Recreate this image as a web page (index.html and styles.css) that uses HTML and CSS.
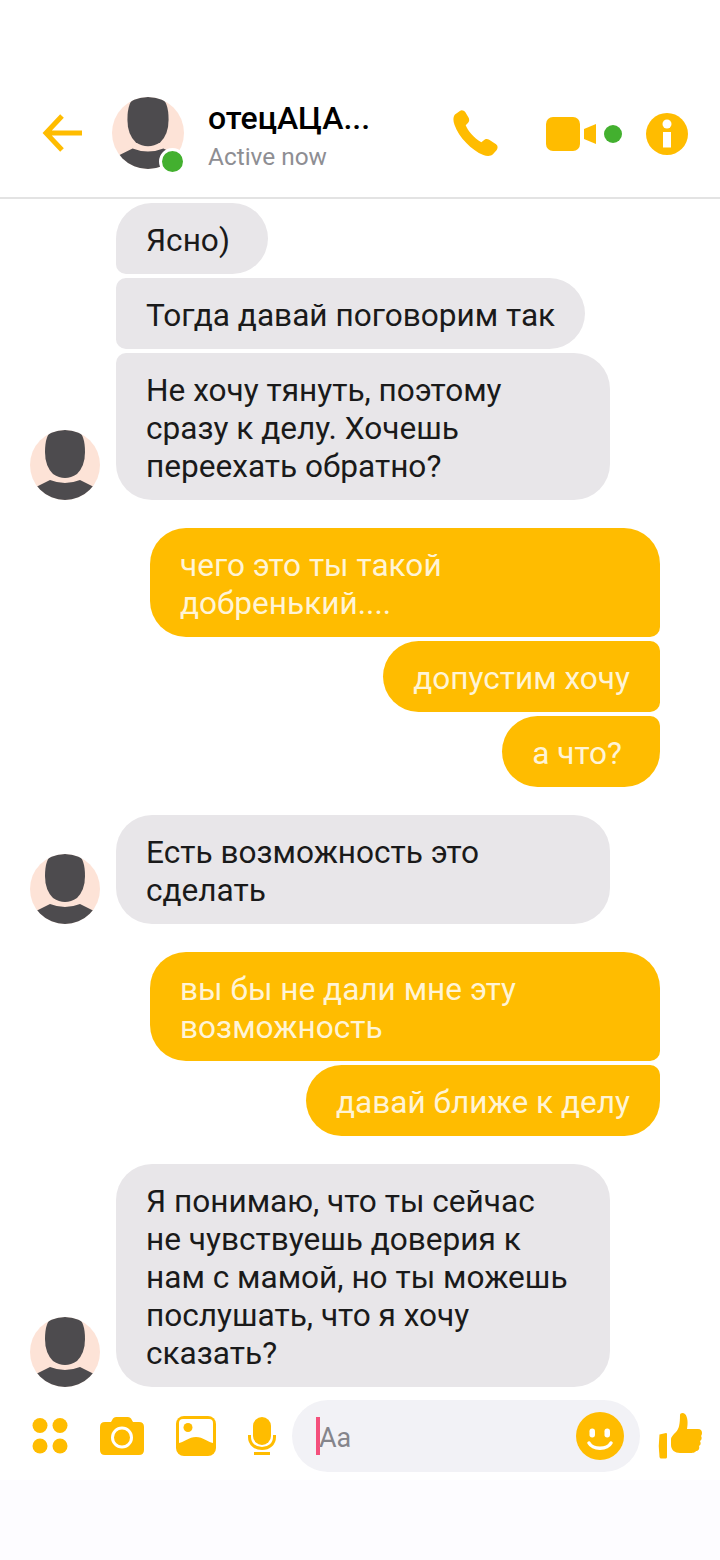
FILE: index.html
```html
<!DOCTYPE html>
<html lang="en">
<head>
    <meta charset="UTF-8">
    <meta name="viewport" content="width=device-width, initial-scale=1.0">
    <title>Chat</title>
    <link rel="stylesheet" href="styles.css">
</head>
<body>
    <svg class="defs" width="0" height="0">
        <clipPath id="avatarClip"><circle cx="35" cy="35" r="35"/></clipPath>
        <symbol id="avatar" viewBox="0 0 70 70">
            <circle cx="35" cy="35" r="35" fill="#fde3d7"/>
            <g clip-path="url(#avatarClip)" fill="#4d4b4e">
                <path d="M22 1 Q35 -1 48 1 Q55 5 55 22 Q55 36 47 44 Q41 48 35 48 Q29 48 23 44 Q15 36 15 22 Q15 5 22 1Z"/>
                <path d="M0 60 L20 50 Q35 56 50 50 L70 60 V70 H0Z"/>
            </g>
        </symbol>
    </svg>

    <header class="top-bar">
        <svg class="back-icon" width="42" height="40" viewBox="0 0 42 40"><path d="M40 20H5M20 3 4 20l16 17" fill="none" stroke="#ffbc00" stroke-width="5"/></svg>
        <div class="top-avatar">
            <svg width="72" height="72"><use href="#avatar"/></svg>
            <span class="online-badge"></span>
        </div>
        <div class="contact">
            <div class="contact-name">отецАЦА...</div>
            <div class="contact-status">Active now</div>
        </div>
        <div class="actions">
            <svg class="phone-icon" width="45" height="47" viewBox="0 0 46 48"><path fill="#ffbc00" d="M7 1C9-.5 11 .5 12.500 2L16 8C17 10 16.500 12 15 13.500L13 15.500C15 21 21 28 29 33L31.500 31C33 29.500 35 29 37 30.500L44 35C46 36.500 46 39 44.500 41L41 45C38.500 47.500 35 47.500 31 46C19 41 6 28 1.500 15C0 11 0 7 2 4.500Z"/></svg>
            <svg class="video-icon" width="50" height="34" viewBox="0 0 50 34"><rect width="34" height="34" rx="7" fill="#ffbc00"/><path d="M38 12 50 7V27L38 22Z" fill="#ffbc00"/></svg>
            <span class="video-dot"></span>
            <svg class="info-icon" width="42" height="42" viewBox="0 0 42 42"><circle cx="21" cy="21" r="21" fill="#ffbc00"/><circle cx="21" cy="11" r="4.500" fill="#fff"/><path d="M17 19H25V34.500H17Z" fill="#fff"/></svg>
        </div>
    </header>

    <main class="messages">
        <div class="group incoming">
            <svg class="avatar" width="70" height="70"><use href="#avatar"/></svg>
            <div class="stack">
                <div class="bubble bubble-short">Ясно)</div>
                <div class="bubble">Тогда давай поговорим так</div>
                <div class="bubble">Не хочу тянуть, поэтому сразу к делу. Хочешь переехать обратно?</div>
            </div>
        </div>

        <div class="group outgoing">
            <div class="stack">
                <div class="bubble">чего это ты такой добренький....</div>
                <div class="bubble">допустим хочу</div>
                <div class="bubble bubble-short">а что?</div>
            </div>
        </div>

        <div class="group incoming">
            <svg class="avatar" width="70" height="70"><use href="#avatar"/></svg>
            <div class="stack">
                <div class="bubble">Есть возможность это сделать</div>
            </div>
        </div>

        <div class="group outgoing">
            <div class="stack">
                <div class="bubble">вы бы не дали мне эту возможность</div>
                <div class="bubble">давай ближе к делу</div>
            </div>
        </div>

        <div class="group incoming">
            <svg class="avatar" width="70" height="70"><use href="#avatar"/></svg>
            <div class="stack">
                <div class="bubble">Я понимаю, что ты сейчас<br>не чувствуешь доверия к<br>нам с мамой, но ты можешь послушать, что я хочу сказать?</div>
            </div>
        </div>
    </main>

    <footer class="composer">
        <svg width="36" height="36" viewBox="0 0 36 36" class="tool-grid" fill="#ffbc00"><circle cx="8" cy="7.500" r="7.500"/><circle cx="28" cy="7.500" r="7.500"/><circle cx="8" cy="28" r="7.500"/><circle cx="28" cy="28" r="7.500"/></svg>
        <svg width="44" height="38" viewBox="0 0 44 38" class="tool-camera"><path fill="#ffbc00" d="M5 5H11L13 1.500Q14 0 16 0H28Q30 0 31 1.500L33 5H39Q44 5 44 10V33Q44 38 39 38H5Q0 38 0 33V10Q0 5 5 5Z"/><circle cx="22" cy="20.500" r="9.500" fill="none" stroke="#fff" stroke-width="3"/></svg>
        <svg width="40" height="40" viewBox="0 0 40 40" class="tool-image"><rect width="40" height="40" rx="8" fill="#ffbc00"/><path fill="#fff" d="M7 3H33Q37 3 37 7V27C32 26 27 21 20 21C13 21 8 26 3 27V7Q3 3 7 3Z"/><circle cx="12" cy="11.500" r="4.500" fill="#ffbc00"/></svg>
        <svg width="28" height="38" viewBox="0 0 28 38" class="tool-mic"><rect x="5" width="18" height="28" rx="9" fill="#ffbc00"/><path d="M1.500 18V20C1.500 27 7 31.500 14 31.500S26.500 27 26.500 20V18" fill="none" stroke="#ffbc00" stroke-width="3"/><rect x="6" y="35" width="16" height="3" fill="#ffbc00"/></svg>
        <div class="input">
            <span class="caret"></span>
            <span class="placeholder">Aa</span>
            <svg class="smiley" width="48" height="48" viewBox="0 0 48 48"><circle cx="24" cy="24" r="24" fill="#ffbc00"/><rect x="13.500" y="16.500" width="5.500" height="9" rx="2.700" fill="#fff"/><rect x="28.500" y="16.500" width="5.500" height="9" rx="2.700" fill="#fff"/><path d="M13 31C17 38 31 38 35 31" fill="none" stroke="#fff" stroke-width="3.500" stroke-linecap="round"/></svg>
        </div>
        <svg class="like" width="44" height="48" viewBox="0 0 44 48" fill="#ffbc00"><path d="M1.500 22.500 8 21Q9 21 9 22V45Q9 46 8 46.500H3Q2 46.500 1.500 45Q0 34 1.500 22.500Z"/><path d="M13 27C13 25 15 23 18 20C21 17 22 12 22 3C22 1 25 0 27 2C30 5 30 12 29 17H40C43 17 44 19 44 21C44 23 43 24 43 24C44 25 44 28 42 29C43 31 43 33 41 34C42 37 40 39 38 39C38 40 35 41 33 41H22C17 41 13 38 13 33Z"/></svg>
    </footer>
    <div class="nav-space"></div>
</body>
</html>
```

FILE: styles.css
```css
body {
    margin: 0;
    padding: 0;
    background-color: #fff;
    font-family: Roboto, "Noto Sans", sans-serif;
    width: 720px;
    height: 1560px;
    overflow: hidden;
    display: flex;
    flex-direction: column;
}
svg {
    display: block;
    flex-shrink: 0;
}
.defs {
    position: absolute;
}

/* header */
.top-bar {
    display: flex;
    align-items: flex-start;
    height: 100px;
    padding: 97px 32px 0 42px;
    border-bottom: 2px solid #e3e3e3;
}
.back-icon {
    margin-top: 16px;
    margin-right: 28px;
}
.top-avatar {
    position: relative;
    width: 72px;
    height: 72px;
    margin-right: 24px;
}
.online-badge {
    position: absolute;
    right: -1.500px;
    bottom: -6px;
    width: 21px;
    height: 21px;
    background-color: #43b02f;
    border: 3.500px solid #fff;
    border-radius: 50%;
}
.contact-name {
    font-size: 32px;
    font-weight: 500;
    line-height: 36px;
    margin-top: 3px;
    color: #000;
}
.contact-status {
    font-size: 24.400px;
    line-height: 28px;
    margin-top: 7px;
    color: #8e8e93;
}
.actions {
    display: flex;
    align-items: center;
    margin-left: auto;
    margin-top: 13px;
}
.phone-icon {
    margin-right: 48px;
}
.video-icon {
    margin-right: 8px;
}
.video-dot {
    width: 18px;
    height: 18px;
    margin-right: 24px;
    background-color: #43b02f;
    border-radius: 50%;
}

/* messages */
.messages {
    display: flex;
    flex-direction: column;
    gap: 28px;
    padding: 4px 60px 0 30px;
}
.group {
    display: flex;
    align-items: flex-end;
}
.outgoing {
    justify-content: flex-end;
}
.avatar {
    margin-right: 16px;
}
.stack {
    display: flex;
    flex-direction: column;
    gap: 4px;
}
.outgoing .stack {
    align-items: flex-end;
}
.incoming .stack {
    align-items: flex-start;
}
.bubble {
    box-sizing: border-box;
    padding: 19px 30px 14px;
    font-size: 31.600px;
    line-height: 38px;
    border-radius: 36px;
}
.bubble-short {
    padding-right: 38px;
}
.incoming .bubble {
    width: fit-content;
    max-width: 494px;
    color: #1a1a1a;
    background-color: #e8e6e9;
}
.incoming .bubble:not(:first-child) {
    border-top-left-radius: 10px;
}
.incoming .bubble:not(:last-child) {
    border-bottom-left-radius: 10px;
}
.outgoing .bubble {
    max-width: 510px;
    color: #fff4d6;
    background-color: #ffbc00;
}
.outgoing .bubble:not(:first-child) {
    border-top-right-radius: 10px;
}
.outgoing .bubble:not(:last-child) {
    border-bottom-right-radius: 10px;
}

/* bottom input row */
.composer {
    display: flex;
    align-items: center;
    position: absolute;
    top: 1400px;
    left: 0;
    width: 720px;
    height: 72px;
}
.tool-grid {
    margin-left: 32px;
    margin-right: 32px;
}
.tool-camera {
    margin-right: 32px;
}
.tool-image {
    margin-right: 32px;
}
.tool-mic {
    margin-right: 16px;
}
.input {
    display: flex;
    align-items: center;
    box-sizing: border-box;
    width: 348px;
    height: 72px;
    padding: 0 16px 0 24px;
    margin-right: 18px;
    background-color: #f2f2f6;
    border-radius: 36px;
}
.caret {
    width: 4px;
    height: 38px;
    background-color: #f4507c;
}
.placeholder {
    font-size: 27px;
    margin-left: -1px;
    margin-top: 3px;
    color: #85858b;
}
.smiley {
    margin-left: auto;
}
.nav-space {
    position: absolute;
    top: 1480px;
    left: 0;
    width: 720px;
    height: 80px;
    background-color: #fdfcff;
}
```
